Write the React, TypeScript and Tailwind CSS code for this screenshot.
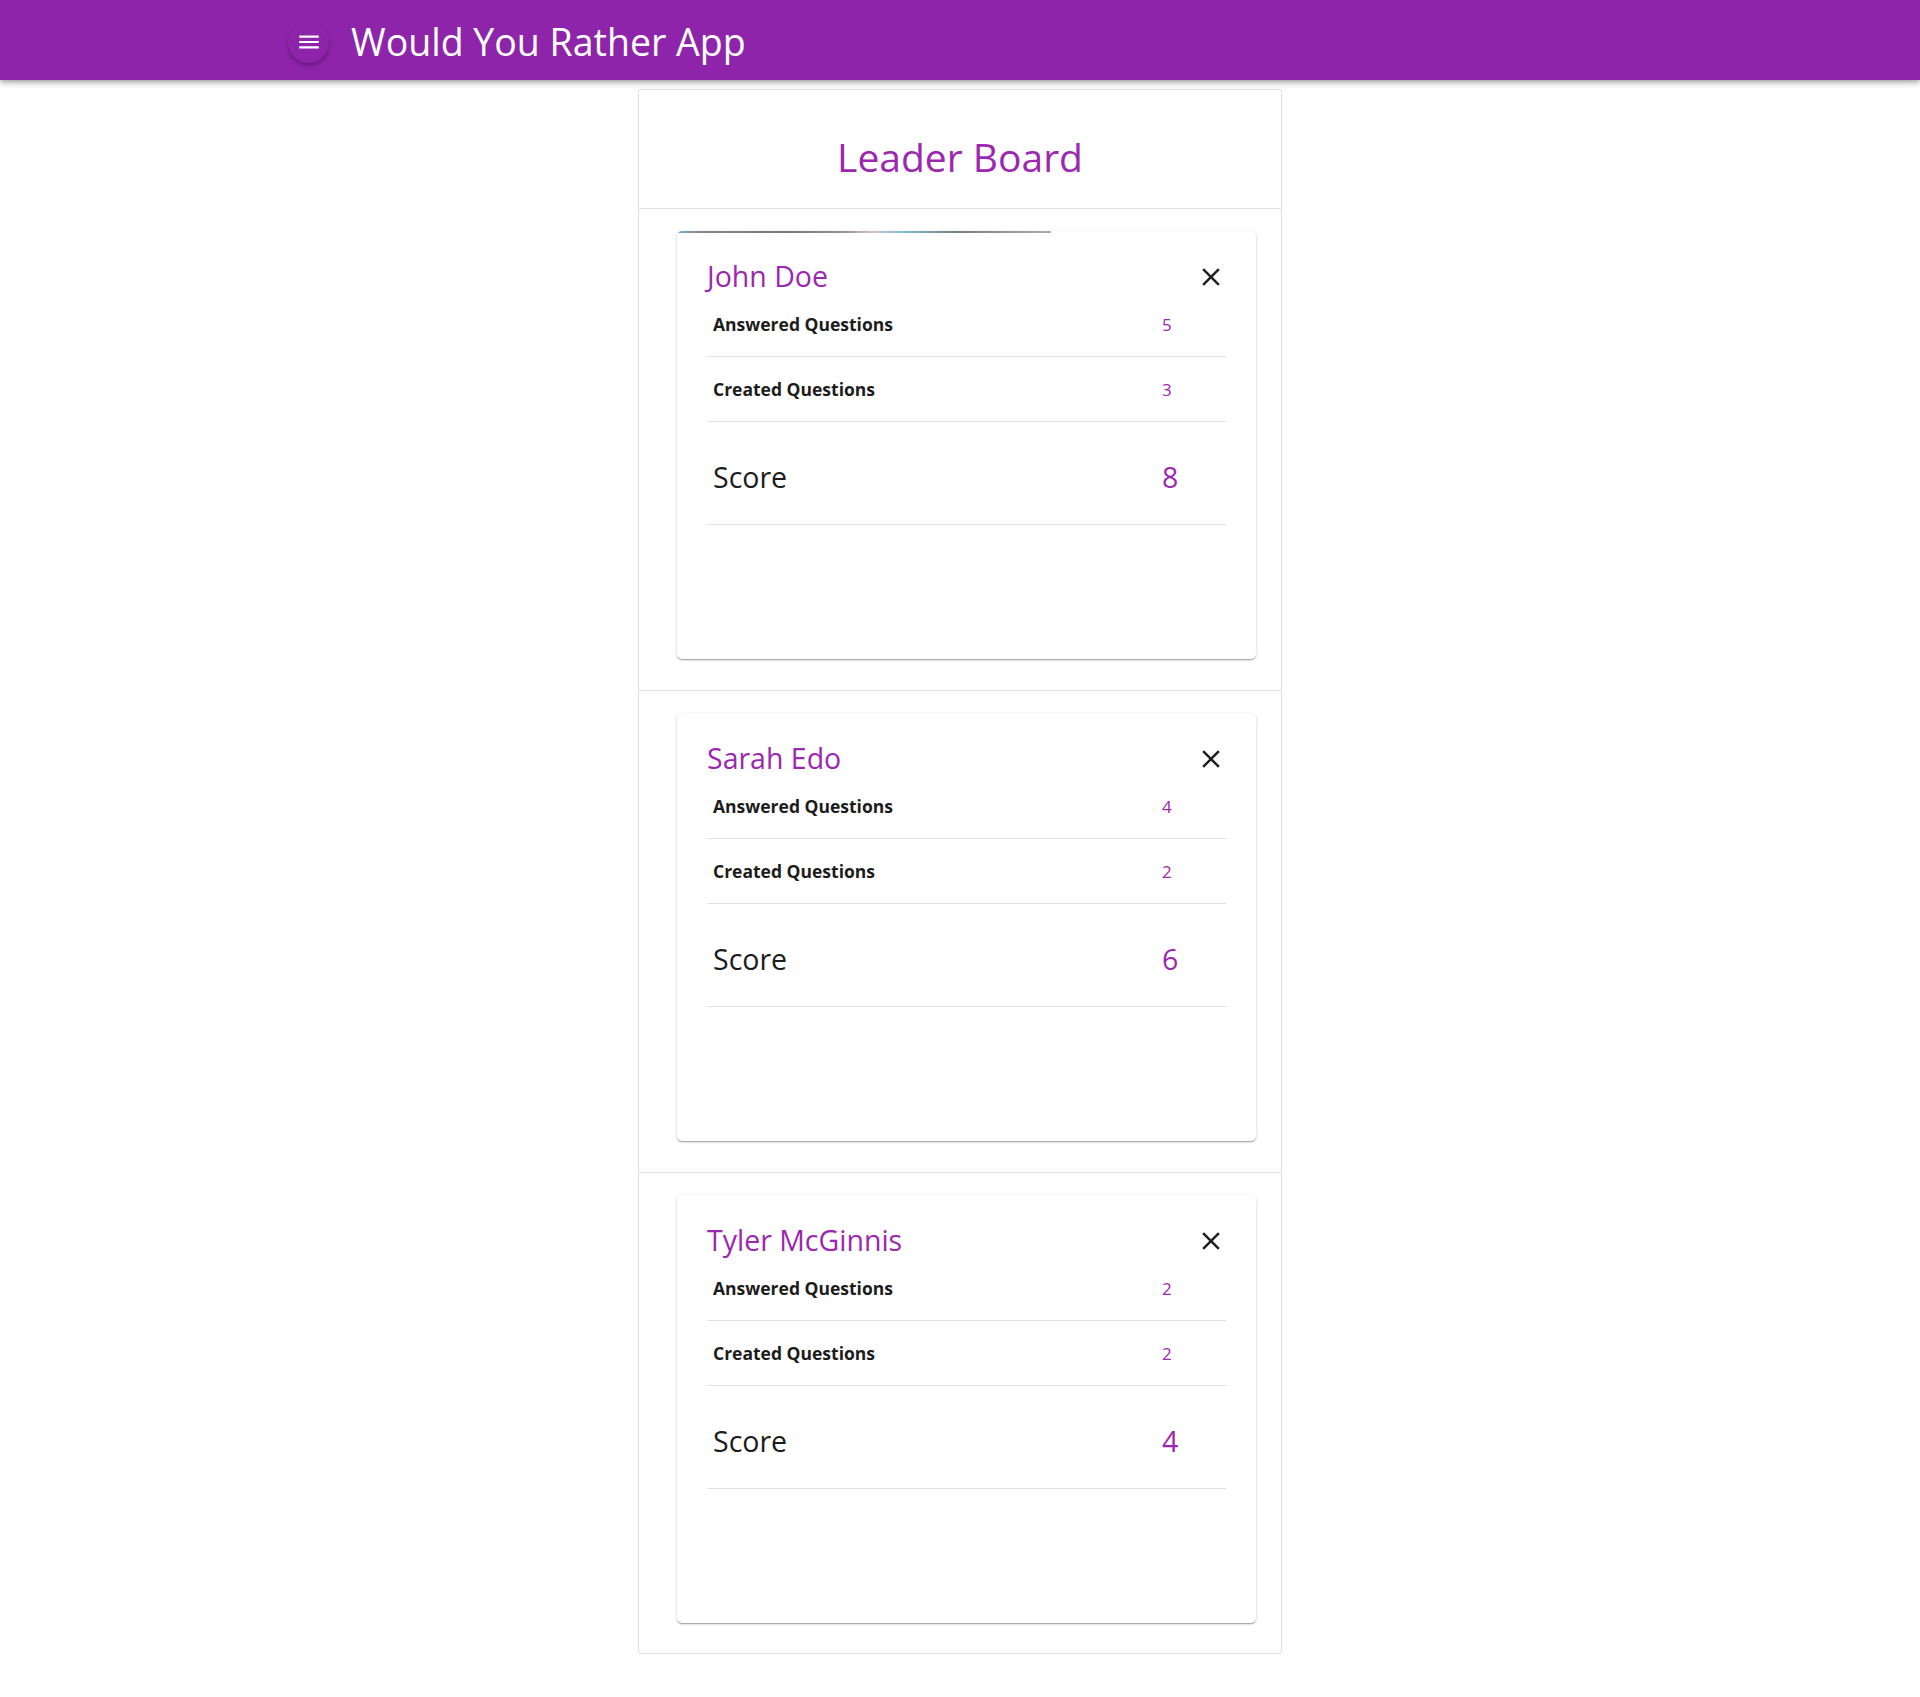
import React from "react";

type User = { name: string; answered: number; created: number; strip?: boolean };

const users: User[] = [
  { name: "John Doe", answered: 5, created: 3, strip: true },
  { name: "Sarah Edo", answered: 4, created: 2 },
  { name: "Tyler McGinnis", answered: 2, created: 2 },
];

function CloseIcon() {
  return (
    <svg viewBox="0 0 24 24" className="w-[30px] h-[30px]" fill="#212121">
      <path d="M19 6.41L17.59 5 12 10.59 6.41 5 5 6.41 10.59 12 5 17.59 6.41 19 12 13.41 17.59 19 19 17.59 13.41 12z" />
    </svg>
  );
}

function MenuIcon() {
  return (
    <svg viewBox="0 0 24 24" className="w-[26px] h-[26px]" fill="#ffffff">
      <path d="M3 18h18v-2H3v2zm0-5h18v-2H3v2zm0-7v2h18V6H3z" />
    </svg>
  );
}

function Row({ label, value }: { label: string; value: number }) {
  return (
    <div className="flex items-center h-[65px] pt-[1px] border-b border-[#e0e0e0]">
      <div className="flex-1 pl-[6px] text-[17.5px] font-bold text-[#1c1c1c]">{label}</div>
      <div className="w-[64px] text-[17px] text-[#9c27b0]">{value}</div>
    </div>
  );
}

function UserCard({ user }: { user: User }) {
  return (
    <div className="relative w-[579px] h-[428px] bg-white rounded-[5px] overflow-hidden shadow-[0px_1px_3px_0px_rgba(0,0,0,0.2),0px_1px_1px_0px_rgba(0,0,0,0.14),0px_2px_1px_-1px_rgba(0,0,0,0.12)]">
      {user.strip && (
        <div className="absolute left-0 top-0 h-[2px] w-[374px] bg-[linear-gradient(90deg,#4aa3d0_0%,#6a6a6a_6%,#555_30%,#7a7a7a_45%,#d2b2b2_52%,#5ab3d6_60%,#5a5a5a_75%,#9a9a9a_100%)] opacity-80" />
      )}
      <div className="px-[30px] pt-[29px]">
        <div className="flex items-center justify-between h-[32px]">
          <div className="text-[28.5px] leading-[34px] text-[#9c27b0]">{user.name}</div>
          <div className="w-[30px] h-[30px] flex items-center justify-center translate-y-[1px]">
            <CloseIcon />
          </div>
        </div>
        <Row label="Answered Questions" value={user.answered} />
        <Row label="Created Questions" value={user.created} />
        <div className="flex items-center h-[103px] pt-[8px] border-b border-[#e0e0e0]">
          <div className="flex-1 pl-[6px] text-[28.5px] text-[#1c1c1c]">Score</div>
          <div className="w-[64px] text-[28.5px] text-[#9c27b0]">{user.answered + user.created}</div>
        </div>
      </div>
    </div>
  );
}

export default function App() {
  return (
    <div className="min-h-screen bg-white font-['Open_Sans','Noto_Sans',sans-serif]">
      <header className="h-20 w-full bg-[#8e24aa] flex items-center shadow-[0px_2px_4px_-1px_rgba(0,0,0,0.2),0px_4px_5px_0px_rgba(0,0,0,0.14),0px_1px_10px_0px_rgba(0,0,0,0.12)]">
        <button className="ml-[288px] mt-[4px] w-[41px] h-[41px] rounded-full bg-[#8e24aa] flex items-center justify-center shadow-[0px_3px_5px_-1px_rgba(0,0,0,0.2),0px_2px_4px_0px_rgba(0,0,0,0.14)]">
          <MenuIcon />
        </button>
        <h1 className="ml-[22px] mt-[4px] text-[37.5px] leading-none text-white font-normal">Would You Rather App</h1>
      </header>
      <main className="flex justify-center pt-[9px] pb-[44px]">
        <div className="w-[644px] border border-[#e0e0e0] rounded-[2px]">
          <div className="h-[119px] flex items-center justify-center border-b border-[#e0e0e0]">
            <h2 className="text-[39px] text-[#9c27b0] pt-[16px]">Leader Board</h2>
          </div>
          {users.map((u, i) => (
            <div
              key={u.name}
              className={
                i < users.length - 1
                  ? "pl-[38px] pt-[22px] pb-[31px] border-b border-[#e0e0e0]"
                  : "pl-[38px] pt-[22px] pb-[30px]"
              }
            >
              <UserCard user={u} />
            </div>
          ))}
        </div>
      </main>
    </div>
  );
}
